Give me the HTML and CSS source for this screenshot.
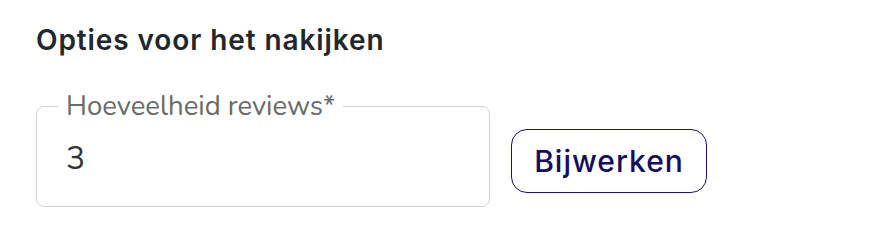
FILE: index.html
```html
<!DOCTYPE html>
<html lang="nl">
<head>
<meta charset="utf-8">
<title>Opties voor het nakijken</title>
<link rel="stylesheet" href="styles.css">
</head>
<body>
<main class="panel">
  <h2 class="title">Opties voor het nakijken</h2>
  <div class="row">
    <fieldset class="field">
      <legend class="field-label">Hoeveelheid reviews*</legend>
      <div class="field-value">3</div>
    </fieldset>
    <button class="btn" type="button">Bijwerken</button>
  </div>
</main>
</body>
</html>
```

FILE: styles.css
```css
html, body {
  margin: 0;
  padding: 0;
  background: #ffffff;
}

.panel {
  padding: 0 36px;
}

.title {
  margin: 23px 0 0;
  font-family: "Inter", "Open Sans", sans-serif;
  font-weight: 600;
  font-size: 28px;
  line-height: 34px;
  color: #23272c;
  letter-spacing: 0.9px;
}

.row {
  display: flex;
  align-items: flex-start;
  gap: 21px;
  margin-top: 34px;
}

.field {
  margin: 0;
  width: 454px;
  box-sizing: border-box;
  border: 1px solid #d3d3d3;
  border-radius: 8px;
  padding: 0 21px;
  min-inline-size: 0;
}

.field-label {
  padding: 0 8px;
  font-family: "Nunito", "Noto Sans", sans-serif;
  font-size: 27.5px;
  line-height: 30px;
  color: #6a6a6a;
}

.field-value {
  padding: 18px 8px 27px;
  font-family: "Nunito", "Noto Sans", sans-serif;
  font-size: 32px;
  line-height: 40px;
  color: #333333;
}

.btn {
  margin-top: 38px;
  width: 196px;
  height: 64px;
  box-sizing: border-box;
  border: 1px solid #1c1070;
  border-radius: 16px;
  background: #ffffff;
  font-family: "Inter", "Open Sans", sans-serif;
  font-weight: 500;
  font-size: 30px;
  letter-spacing: 1px;
  color: #160c60;
  padding: 0;
}
```
